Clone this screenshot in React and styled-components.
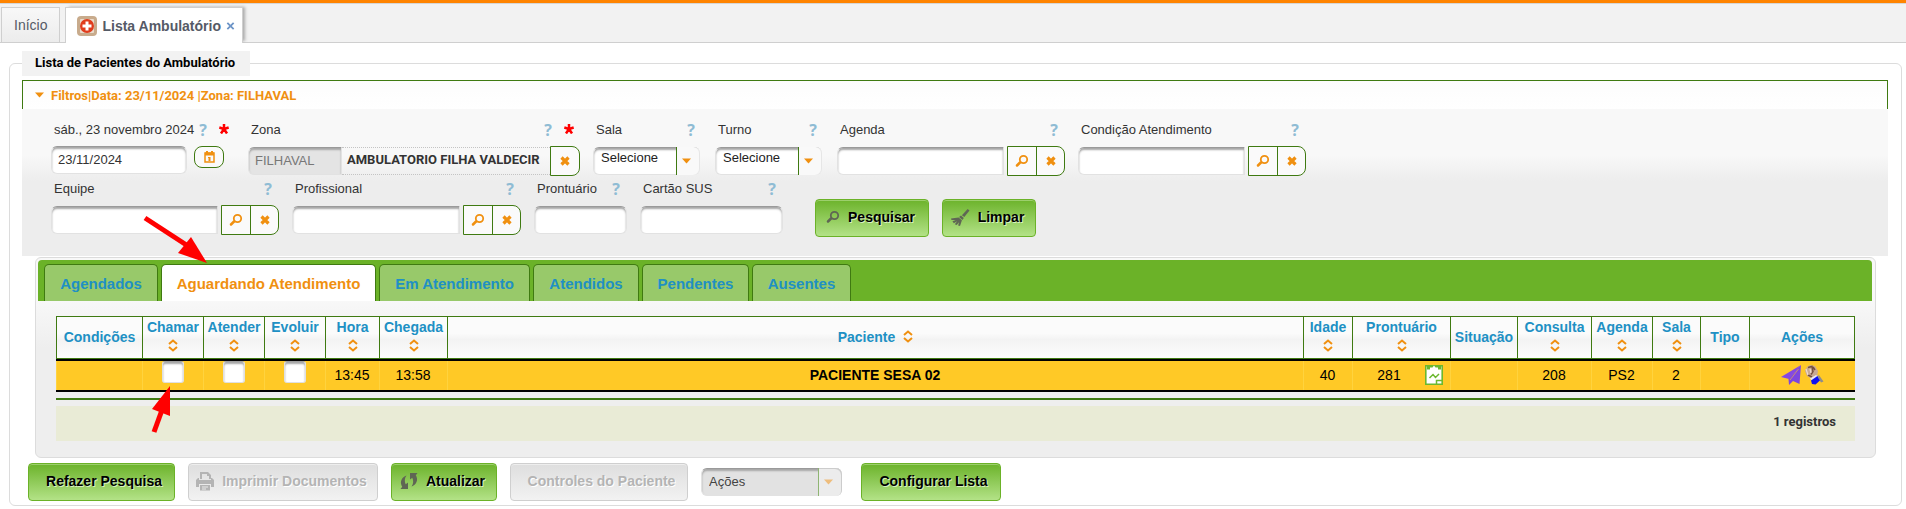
import React from "react";
import styled, { createGlobalStyle, css } from "styled-components";

const C = {
  green: "#3f7a11",
  bar: "#6bb228",
  tab: "#98c96a",
  blue: "#2090c4",
  orange: "#f09010",
  line: "#dcdcdc",
  text: "#333333",
};
const ARIAL = `"Liberation Sans", Arial, sans-serif`;
const COMPACT = `Roboto, "Liberation Sans", Arial, sans-serif`;

const Global = createGlobalStyle`
  * { box-sizing: border-box; }
  body { margin: 0; background: #fff; font: 13px ${ARIAL}; color: ${C.text}; }
  button, input, select { font: inherit; color: inherit; margin: 0; }
`;

const Page = styled.div`position: relative;`;

/* ---- window tabs ---- */
const WindowBar = styled.nav`
  display: flex;
  align-items: flex-end;
  gap: 5px;
  height: 43px;
  padding-left: 1px;
  background: #f2f2f2;
  border-top: 3px solid #ff8400;
  border-bottom: 1px solid #cfcfcf;
  box-shadow: inset 0 1px 0 #d6d6d6;
`;
const WindowTab = styled.div`
  display: flex;
  align-items: center;
  gap: 5px;
  height: ${(p) => (p.$active ? 36 : 35)}px;
  padding: 0 ${(p) => (p.$active ? 7 : 12)}px 0 ${(p) => (p.$active ? 11 : 12)}px;
  border: 1px solid #cfcfcf;
  border-bottom: 0;
  background: linear-gradient(#f8f8f8, #ececec);
  font-size: 14px;
  color: #555a66;
  ${(p) => p.$active && css`
    position: relative;
    margin-bottom: -1px;
    background: #fff;
    font-weight: bold;
    box-shadow: 3px -1px 3px -1px #aaa;
    clip-path: inset(-4px -6px 0 -2px);
  `}
`;
const PlainButton = styled.button`
  display: inline-flex;
  align-items: center;
  justify-content: center;
  padding: 0;
  border: 0;
  background: none;
  cursor: pointer;
`;
const TabLink = styled.a`
  color: inherit;
  text-decoration: none;
`;

/* ---- group box ---- */
const Group = styled.fieldset`
  margin: 8px 4px 3px 9px;
  min-width: 0;
  padding: 0 13px 4px 12px;
  border: 1px solid ${C.line};
  border-radius: 6px;
`;
const Legend = styled.legend`
  height: 25px;
  padding: 0 15px 0 13px;
  background: #f2f2f2;
  color: #000;
  font: bold 13px/24px ${COMPACT};
`;

/* ---- filters ---- */
const FilterHead = styled.button`
  display: flex;
  align-items: center;
  gap: 7px;
  width: 100%;
  height: 29px;
  margin-top: 4px;
  padding: 0 12px;
  border: 1px solid ${C.green};
  border-bottom: 0;
  background: linear-gradient(#fcfcfc, #fff);
  && { font: bold 13px ${COMPACT}; color: ${C.orange}; }
`;
const FilterPanel = styled.form`
  display: flex;
  flex-direction: column;
  gap: 3px;
  padding: 11px 29px 21px;
  background: linear-gradient(#f8f8f8 46px, #ededed 72px);
`;
const FieldRow = styled.div`
  display: flex;
  gap: 13px;
`;
const FieldBox = styled.div`
  display: flex;
  flex-direction: column;
  gap: 6px;
  width: ${(p) => p.$w}px;
`;
const LabelLine = styled.div`
  display: flex;
  align-items: center;
  height: 20px;
  padding: 0 6px 2px 3px;
  label { flex: 1; white-space: nowrap; }
`;
const Help = styled.span`
  width: 10px;
  padding-top: 2px;
  text-align: center;
  color: #8fbcd4;
  font: bold 16px/20px "Open Sans", ${ARIAL};
`;
const Required = styled.svg`margin-left: 11px;`;
const Controls = styled.div`
  display: flex;
  align-items: ${(p) => (p.$top ? "flex-start" : "center")};
  height: 30px;
  padding-right: ${(p) => (p.$top ? 11 : 0)}px;
`;
const sunken = css`
  border: 1px solid #e2e2e2;
  border-top-color: #9a9a9a;
  box-shadow: inset 0 2px 2px #a6a6a6;
`;
const TextInput = styled.input`
  ${sunken}
  flex: 1;
  min-width: 0;
  height: 28px;
  padding: 0 6px 2px;
  border-radius: ${(p) => (p.$joined ? "6px 0 0 6px" : "6px")};
  background: #fff;
  ${(p) => p.readOnly && css`
    flex: 0 0 94px;
    background: #e4e4e4;
    color: #777;
  `}
`;
const Output = styled.output`
  flex: 1;
  height: 28px;
  padding-left: 5px;
  border: 1px dotted #c4c4c4;
  border-width: 1px 0;
  font: bold 13px/24px ${COMPACT};
  white-space: nowrap;
  overflow: hidden;
`;
const IconGroup = styled.div`
  display: flex;
  height: 30px;
  margin-left: ${(p) => (p.$apart ? 3 : 0)}px;
  border: 1px solid ${C.green};
  border-radius: 0 8px 8px 0;
  background: #fafafa;
  button { width: 28px; }
  button + button { border-left: 1px solid ${C.green}; }
`;
const DateButton = styled(PlainButton)`
  width: 30px;
  height: 22px;
  margin-left: 7px;
  border: 1px solid ${C.green};
  border-radius: 8px;
  background: #fafafa;
`;
const SelectBox = styled.div`
  position: relative;
  display: flex;
  width: ${(p) => p.$w || 107}px;
  select {
    ${sunken}
    appearance: none;
    flex: 1;
    height: 28px;
    padding: 0 28px ${(p) => (p.$off ? 2 : 8)}px 7px;
    border-radius: 6px;
    background: ${(p) => (p.$off ? "#e2e2e2" : "#fff")};
    color: ${(p) => (p.$off ? "#444" : "#222")};
    opacity: 1;
  }
  span {
    position: absolute;
    inset: 0 0 0 auto;
    display: flex;
    align-items: center;
    justify-content: center;
    width: 24px;
    padding-right: 4px;
    border-left: 1px solid ${(p) => (p.$off ? "#8fb573" : C.green)};
    border-radius: 0 6px 6px 0;
    box-shadow: inset -1px ${(p) => (p.$off ? "1px #ccc" : "0 #e6e6e6")};
    background: ${(p) => (p.$off ? "#ececec" : "#f9f9f9")};
    pointer-events: none;
  }
  span svg { opacity: ${(p) => (p.$off ? 0.5 : 1)}; }
`;
const ActionButton = styled.button`
  display: flex;
  align-items: center;
  justify-content: center;
  gap: 8px;
  height: 38px;
  width: ${(p) => p.$w}px;
  margin-left: ${(p) => p.$ml || 0}px;
  padding: ${(p) => (p.$plain ? "0 0 2px 5px" : "0 3px 2px 0")};
  border: 1px solid ${C.bar};
  border-radius: 4px;
  background: linear-gradient(#6cb32b, #b3e287);
  box-shadow: inset 0 1px 0 #9ccf6c;
  text-shadow: 1px 1px 0 #d9f0c0;
  white-space: nowrap;
  && { font: bold 14px ${ARIAL}; color: #000; }
  &:disabled {
    border-color: #cfcfcf;
    background: linear-gradient(#dedede, #f2f2f2);
    box-shadow: inset 0 1px 0 #eee;
    text-shadow: 1px 1px 0 #fff;
  }
  &&:disabled { color: #b4b4b4; }
`;
const SearchActions = styled.div`
  display: flex;
  height: 56px;
  margin-left: 19px;
  padding-top: 20px;
`;

/* ---- tabbed list ---- */
const Panel = styled.section`
  margin: 1px 12px 5px 13px;
  padding: 2px 3px 16px 2px;
  border: 1px solid ${C.line};
  border-radius: 6px;
  background: linear-gradient(#f8f8f8 42px, #eeeeee 90px);
`;
const TabBar = styled.div`
  display: flex;
  align-items: flex-end;
  gap: 3px;
  height: 41px;
  padding-left: 6px;
  background: ${C.bar};
  border-radius: 4px 4px 0 0;
`;
const ListTab = styled.button`
  width: ${(p) => p.$w}px;
  height: 37px;
  padding: 0;
  border: 1px solid ${C.green};
  border-bottom: 0;
  border-radius: 5px 5px 0 0;
  background: ${(p) => (p.$on ? "#fff" : C.tab)};
  white-space: nowrap;
  && { font: bold 15px ${ARIAL}; color: ${(p) => (p.$on ? C.orange : C.blue)}; }
`;
const ListBody = styled.div`padding: 15px 17px 0 18px;`;
const Table = styled.table`
  width: 100%;
  table-layout: fixed;
  border-collapse: separate;
  border-spacing: 0;
  font-size: 14px;
  color: #000;
`;
const Th = styled.th`
  height: 43px;
  padding: 0;
  border: 1px solid ${C.green};
  border-right-width: 0;
  background: linear-gradient(#fbfbfb 40%, #f3f3f3 55%, #fcfcfc);
  color: ${C.blue};
  white-space: nowrap;
  vertical-align: middle;
  &:last-child { border-right-width: 1px; }
`;
const HeadStack = styled.div`
  display: flex;
  flex-direction: ${(p) => (p.$inline ? "row" : "column")};
  align-items: center;
  justify-content: center;
  gap: ${(p) => (p.$inline ? 8 : 4)}px;
  padding-bottom: ${(p) => (p.$sortable && !p.$inline ? 4 : 2)}px;
  line-height: 16px;
`;
const Td = styled.td`
  height: 33px;
  padding: 0 0 ${(p) => (p.$top ? 0 : 2)}px;
  border: 0 solid #000;
  border-width: 2px 0;
  background: #ffc926;
  box-shadow: inset 1px 0 #ffd33e;
  text-align: center;
  vertical-align: ${(p) => (p.$top ? "top" : "middle")};
  font-weight: ${(p) => (p.$bold ? "bold" : "normal")};
`;
const Tick = styled.input.attrs({ type: "checkbox" })`
  ${sunken}
  && { display: block; margin: 0 auto; }
  appearance: none;
  width: 22px;
  height: 22px;
  border-color: #a0a0a0 #e0e0e0 #e0e0e0;
  border-radius: 3px;
  background: #fff;
`;
const CellLine = styled.div`
  display: flex;
  align-items: center;
  justify-content: center;
  gap: ${(p) => p.$gap}px;
  padding-left: ${(p) => p.$indent || 0}px;
`;
const Rule = styled.div`
  height: 2px;
  margin: 6px 0;
  background: ${C.green};
`;
const Count = styled.div`
  height: 35px;
  padding-right: 19px;
  background: #e9ebd6;
  text-align: right;
  font: bold 13px/32px ${COMPACT};
`;
const Footer = styled.div`
  display: flex;
  align-items: center;
  gap: 13px;
  padding-left: 6px;
`;

/* ---- annotation arrows ---- */
const Arrow = styled.svg`
  position: absolute;
  left: ${(p) => p.$x}px;
  top: ${(p) => p.$y}px;
  pointer-events: none;
`;

/* ---- icons ---- */
const HospitalIcon = () => (
  <svg width="20" height="20" viewBox="0 0 20 20" aria-hidden="true">
    <rect width="20" height="20" rx="4" fill="#c8ab8c" />
    <rect x="3" y="3" width="14" height="14" rx="1" fill="#e9dccd" />
    <circle cx="10" cy="10" r="7" fill="#e03c1c" />
    <path d="M8.500 5.500h3v3h3v3h-3v3h-3v-3h-3v-3h3z" fill="#fff" />
  </svg>
);
const Lens = ({ color = C.orange }) => (
  <svg width="14" height="14" viewBox="0 0 14 14" fill="none" stroke={color} aria-hidden="true">
    <circle cx="8.5" cy="5.5" r="3.700" strokeWidth="1.800" />
    <path d="M5 8.500L2 11.500" strokeWidth="2.500" strokeLinecap="round" />
  </svg>
);
const Cross = () => (
  <svg width="10" height="10" viewBox="0 0 10 10" aria-hidden="true">
    <path d="M1.500 1.500L8.500 8.500M8.500 1.500L1.500 8.500" stroke={C.orange} strokeWidth="3.200" />
  </svg>
);
const Caret = () => (
  <svg width="9" height="6" viewBox="0 0 9 6" aria-hidden="true"><path d="M0 .5h9L4.500 5.500z" fill={C.orange} /></svg>
);
const Sort = () => (
  <svg width="10" height="13" viewBox="0 0 10 13" fill="none" stroke={C.orange} strokeWidth="2" aria-hidden="true">
    <path d="M1 5L5 1.500L9 5M1 8L5 11.500L9 8" />
  </svg>
);
const Calendar = () => (
  <svg width="11" height="12" viewBox="0 0 11 12" aria-hidden="true">
    <path d="M1 2h9v9H1z" fill="none" stroke={C.orange} strokeWidth="1.500" />
    <path d="M1 1.500h9V4.500H1zM2 0h2v2H2zM7 0h2v2H7zM4.500 6h2v4h-2z" fill={C.orange} />
    <path d="M4 6.500h2" stroke={C.orange} />
  </svg>
);
const Broom = () => (
  <svg width="19" height="19" viewBox="0 0 20 19" fill="#5f6654" aria-hidden="true">
    <path d="M17.500.5l2 1.500-5.500 7-2.500-2z" />
    <path d="M10.500 7.500l3 2.500-1.500 2-3.500-3z" />
    <path d="M8 9.500l3.500 3L9.500 18.500 7.500 18l1-3.500L6 17.500 4 16.500l2.500-3L3 15.500l-1.500-2L5 12 .5 12 0 10.500z" />
  </svg>
);
const Printer = () => (
  <svg width="18" height="19" viewBox="0 0 18 19" fill="#b4b4b4" aria-hidden="true">
    <path d="M4 0h8l3 3v4h-2V4h-2V2H6v5H4z" />
    <path d="M2 6h1v2h12V6h1l2 2v7h-3v-3H3v3H0V8z" />
    <path d="M4 13h10v5.500H4zM6 14.500h6v1H6zM6 16.500h4v1H6z" fillRule="evenodd" />
  </svg>
);
const Refresh = () => (
  <svg width="18" height="18" viewBox="0 0 18 18" fill="#5f6654" aria-hidden="true">
    <path d="M6.500 3.500C3 4.500 .5 8 1 11.500c.2 1.300.6 2.300 1.200 3.200L.5 17H8v-6.500l-2.300 1.800C4.300 9.500 4.500 6 6.500 3.500z" />
    <path d="M11.500 14.500c3.500-1 6-4.500 5.500-8-.2-1.300-.6-2.300-1.200-3.200L17.500 1H10v6.500l2.300-1.800c1.400 2.800 1.200 6.300-.8 8.800z" />
  </svg>
);
const Clipboard = () => (
  <svg width="18" height="20" viewBox="0 0 18 20" aria-hidden="true">
    <path d="M.8.800h16.400v18.400H.8z" fill="#fff" stroke="#6bb82e" strokeWidth="1.600" />
    <path d="M2 1h14v3.500H2z" fill="#6bb82e" />
    <path d="M5 5V2.500h2.500L9 .5l1.500 2H13V5z" fill="#fff" />
    <path d="M4.500 13l3.500-3.500 2.500 3 3.500-3.500" fill="none" stroke="#6bb82e" strokeWidth="1.500" />
    <path d="M11.500 19v-3.500H17" fill="none" stroke="#6bb82e" strokeWidth="1.500" />
  </svg>
);
const Plane = () => (
  <svg width="20" height="20" viewBox="0 0 20 20" aria-hidden="true">
    <path d="M20 0l-1.500 19-6.500-3L8 20l-.5-6z" fill="#7d45df" />
    <path d="M20 0L8 14 0 12z" fill="#8447e4" />
    <path d="M17.500 4L9 15" stroke="#c78a7a" />
  </svg>
);
const Hand = () => (
  <svg width="20" height="20" viewBox="0 0 20 20" aria-hidden="true">
    <path d="M3 2l3-2 5 1 3 5-1 6-5 2-5-3-2-5z" fill="#c9a994" />
    <path d="M4 2.500l4-1 1 5-2 3M9 2l2 3M4 10l4 2" fill="none" stroke="#75503f" strokeWidth="1.500" />
    <path d="M2 4l2 6M6 4l1 4" stroke="#f1ddd0" strokeWidth="1.200" />
    <path d="M6 13.500l6-3.500 3 2-6 5z" fill="#eceaf4" />
    <path d="M7 15.500l6.500-4.500 3 4-5 4.500-3.500-.5z" fill="#1010f0" />
    <path d="M14.500 9.500l5 7-2.500 1-3-5z" fill="#8c8a90" />
  </svg>
);

/* ---- composed parts ---- */
const Field = ({ id, label, w, required, children, top }) => (
  <FieldBox $w={w}>
    <LabelLine>
      <label htmlFor={id}>{label}</label>
      <Help>?</Help>
      {required && (
        <Required width="10" height="10" viewBox="0 0 10 10" stroke="#f00" strokeWidth="2.500" aria-hidden="true">
          <path d="M5 0V5M.3 3.500L5 5M9.700 3.500L5 5M2 9.500L5 5M8 9.500L5 5" />
        </Required>
      )}
    </LabelLine>
    <Controls $top={top}>{children}</Controls>
  </FieldBox>
);
const Lookup = ({ id, label, w = 228 }) => (
  <Field id={id} label={label} w={w}>
    <TextInput id={id} $joined />
    <IconGroup $apart>
      <PlainButton type="button" aria-label="Buscar"><Lens /></PlainButton>
      <PlainButton type="button" aria-label="Limpar"><Cross /></PlainButton>
    </IconGroup>
  </Field>
);
const Choice = ({ id, value, w, off, label }) => (
  <SelectBox $w={w} $off={off}>
    <select id={id} disabled={off} aria-label={label}><option>{value}</option></select>
    <span><Caret /></span>
  </SelectBox>
);

const TABS = [
  ["Agendados", 114], ["Aguardando Atendimento", 215], ["Em Atendimento", 151],
  ["Atendidos", 106], ["Pendentes", 107], ["Ausentes", 99],
];
const COLUMNS = [
  ["Condições", 86], ["Chamar", 61, 1], ["Atender", 61, 1], ["Evoluir", 61, 1], ["Hora", 54, 1],
  ["Chegada", 68, 1], ["Paciente", null, 1], ["Idade", 49, 1], ["Prontuário", 98, 1], ["Situação", 67],
  ["Consulta", 74, 1], ["Agenda", 61, 1], ["Sala", 48, 1], ["Tipo", 49], ["Ações", 106],
];

export default function App() {
  return (
    <Page>
      <Global />
      <WindowBar>
        <WindowTab><TabLink href="#inicio">Início</TabLink></WindowTab>
        <WindowTab $active>
          <HospitalIcon />
          <TabLink href="#lista">Lista Ambulatório</TabLink>
          <PlainButton aria-label="Fechar">
            <svg width="9" height="10" viewBox="0 0 10 10" aria-hidden="true">
              <path d="M1.500 1.500l7 7M8.500 1.500l-7 7" stroke="#6f96c8" strokeWidth="2" />
            </svg>
          </PlainButton>
        </WindowTab>
      </WindowBar>

      <Group>
        <Legend>Lista de Pacientes do Ambulatório</Legend>
        <FilterHead type="button"><Caret />Filtros|Data: 23/11/2024 |Zona: FILHAVAL</FilterHead>
        <FilterPanel>
          <FieldRow>
            <Field id="data" label="sáb., 23 novembro 2024" w={184} required top>
              <TextInput id="data" defaultValue="23/11/2024" />
              <DateButton type="button" aria-label="Calendário"><Calendar /></DateButton>
            </Field>
            <Field id="zona" label="Zona" w={332} required>
              <TextInput id="zona" defaultValue="FILHAVAL" readOnly $joined />
              <Output htmlFor="zona">AMBULATORIO FILHA VALDECIR</Output>
              <IconGroup><PlainButton type="button" aria-label="Limpar"><Cross /></PlainButton></IconGroup>
            </Field>
            <Field id="sala" label="Sala" w={109}><Choice id="sala" value="Selecione" /></Field>
            <Field id="turno" label="Turno" w={109}><Choice id="turno" value="Selecione" /></Field>
            <Lookup id="agenda" label="Agenda" />
            <Lookup id="condicao" label="Condição Atendimento" />
          </FieldRow>
          <FieldRow>
            <Lookup id="equipe" label="Equipe" />
            <Lookup id="profissional" label="Profissional" w={229} />
            <Field id="prontuario" label="Prontuário" w={93}><TextInput id="prontuario" /></Field>
            <Field id="sus" label="Cartão SUS" w={143}><TextInput id="sus" /></Field>
            <SearchActions>
              <ActionButton type="button" $w={114}><Lens color="#5f6654" />Pesquisar</ActionButton>
              <ActionButton type="button" $w={94} $ml={13}><Broom />Limpar</ActionButton>
            </SearchActions>
          </FieldRow>
        </FilterPanel>

        <Panel>
          <TabBar role="tablist">
            {TABS.map(([name, w], i) => (
              <ListTab key={name} role="tab" aria-selected={i === 1} $w={w} $on={i === 1}>{name}</ListTab>
            ))}
          </TabBar>
          <ListBody>
            <Table>
              <colgroup>{COLUMNS.map(([n, w]) => <col key={n} width={w || undefined} />)}</colgroup>
              <thead>
                <tr>
                  {COLUMNS.map(([name, w, sortable]) => (
                    <Th key={name} scope="col">
                      <HeadStack $inline={!w} $sortable={sortable}>{name}{sortable && <Sort />}</HeadStack>
                    </Th>
                  ))}
                </tr>
              </thead>
              <tbody>
                <tr>
                  <Td />
                  <Td $top><Tick aria-label="Chamar" /></Td>
                  <Td $top><Tick aria-label="Atender" /></Td>
                  <Td $top><Tick aria-label="Evoluir" /></Td>
                  <Td>13:45</Td>
                  <Td>13:58</Td>
                  <Td $bold>PACIENTE SESA 02</Td>
                  <Td>40</Td>
                  <Td><CellLine $gap={24} $indent={18}>281<Clipboard /></CellLine></Td>
                  <Td />
                  <Td>208</Td>
                  <Td>PS2</Td>
                  <Td>2</Td>
                  <Td />
                  <Td>
                    <CellLine $gap={3}>
                      <PlainButton aria-label="Encaminhar"><Plane /></PlainButton>
                      <PlainButton aria-label="Classificar"><Hand /></PlainButton>
                    </CellLine>
                  </Td>
                </tr>
              </tbody>
            </Table>
            <Rule />
            <Count>1 registros</Count>
          </ListBody>
        </Panel>

        <Footer>
          <ActionButton $w={147} $plain>Refazer Pesquisa</ActionButton>
          <ActionButton $w={190} disabled><Printer />Imprimir Documentos</ActionButton>
          <ActionButton $w={106}><Refresh />Atualizar</ActionButton>
          <ActionButton $w={178} $plain disabled>Controles do Paciente</ActionButton>
          <Choice id="acoes" label="Ações" value="Ações" w={141} off />
          <ActionButton $w={140} $ml={6} $plain>Configurar Lista</ActionButton>
        </Footer>
      </Group>

      <Arrow $x={140} $y={212} width="70" height="54" viewBox="0 0 70 54" aria-hidden="true">
        <path d="M5 6L48 34" stroke="#f00" strokeWidth="5" />
        <path d="M67 51L38 41L51 25z" fill="#f00" />
      </Arrow>
      <Arrow $x={148} $y={384} width="28" height="52" viewBox="0 0 28 52" aria-hidden="true">
        <path d="M6 48L14 26" stroke="#f00" strokeWidth="5" />
        <path d="M22 2L4 25L22 32z" fill="#f00" />
      </Arrow>
    </Page>
  );
}
